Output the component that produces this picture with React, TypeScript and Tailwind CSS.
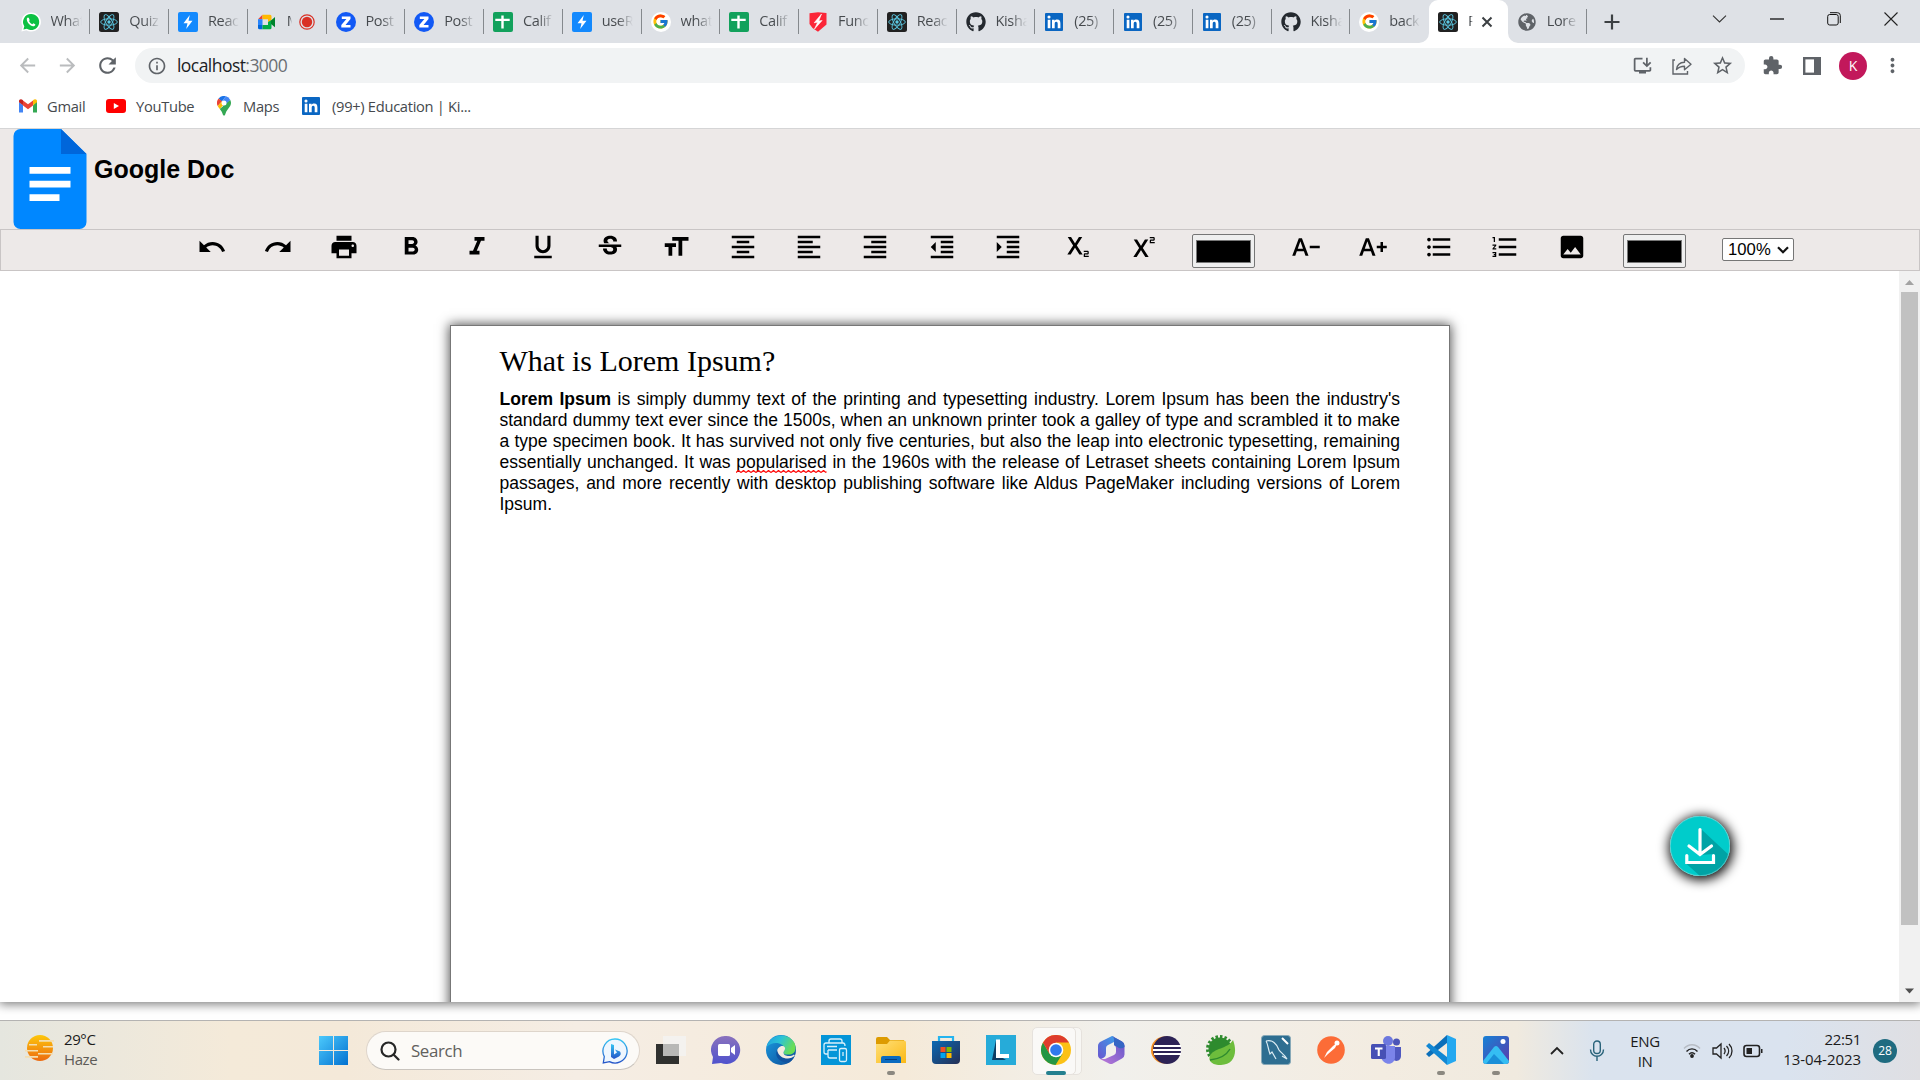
import React from "react";
import {
  MdUndo, MdRedo, MdPrint, MdFormatBold, MdFormatItalic, MdFormatUnderlined, MdStrikethroughS, MdFormatSize,
  MdFormatAlignCenter, MdFormatAlignLeft, MdFormatAlignRight, MdFormatIndentDecrease, MdFormatIndentIncrease,
  MdSubscript, MdSuperscript, MdTextDecrease, MdTextIncrease, MdFormatListBulleted, MdFormatListNumbered, MdImage,
  MdArrowBack, MdArrowForward, MdRefresh, MdInfoOutline, MdStarBorder, MdExtension, MdMoreVert, MdInstallDesktop,
} from "react-icons/md";
import { FaGithub, FaGlobeAmericas } from "react-icons/fa";
import { FcGoogle } from "react-icons/fc";

const WhatsApp = () => (
  <svg width="20" height="20" viewBox="0 0 20 20">
    <path d="M10 .4a9.5 9.5 0 0 0-8.3 14.2L.4 19.6l5.1-1.3A9.6 9.6 0 1 0 10 .4Z" fill="#fff" />
    <path d="M10 2a8 8 0 0 0-6.7 12.3l-.9 3.3 3.4-.9A8 8 0 1 0 10 2Z" fill="#0dc143" />
    <path d="M7 5.6c-.8.3-1.3 1.100-1.200 2 .3 3.200 3.200 6.200 6.400 6.700 1 .1 1.900-.5 2.100-1.500l-.1-.6-1.900-.9-.9 1c-1.500-.5-2.700-1.700-3.400-3.200l.7-.9-.8-2.200Z" fill="#fff" />
  </svg>
);

const ReactIcon = () => (
  <svg width="20" height="20" viewBox="0 0 20 20">
    <rect width="20" height="20" rx="2.500" fill="#212121" />
    <g fill="none" stroke="#5bc9e4" strokeWidth=".9">
      <ellipse cx="10" cy="10" rx="8.300" ry="3.200" />
      <ellipse cx="10" cy="10" rx="8.300" ry="3.200" transform="rotate(60 10 10)" />
      <ellipse cx="10" cy="10" rx="8.300" ry="3.200" transform="rotate(120 10 10)" />
    </g>
    <circle cx="10" cy="10" r="1.700" fill="#5bc9e4" />
  </svg>
);

const Bolt = () => (
  <svg width="20" height="20" viewBox="0 0 20 20">
    <rect width="20" height="20" rx="2" fill="#1389fd" />
    <path d="M11.800 3 5.500 11.300h4L8.200 17l6.300-8.300h-4L11.800 3Z" fill="#fff" />
  </svg>
);

const Meet = () => (
  <svg width="20" height="20" viewBox="0 0 20 20">
    <path d="M1 7.200 5.500 2.700V7.200Z" fill="#ea4335" />
    <path d="M5.500 2.700H13a1.500 1.500 0 0 1 1.500 1.500v4L11 10V7.200H5.500Z" fill="#ffba00" />
    <path d="M1 7.200h4.500V13H1Z" fill="#2684fc" />
    <path d="M1 13h4.500v4.300h-3A1.500 1.500 0 0 1 1 15.800Z" fill="#0066da" />
    <path d="M5.500 13H11v-3l3.500-2v7.800a1.500 1.500 0 0 1-1.500 1.500H5.500Z" fill="#00ac47" />
    <path d="M14 8.400 18 5v10.300L14 12Z" fill="#00832d" />
  </svg>
);

const Zed = () => (
  <svg width="20" height="20" viewBox="0 0 20 20">
    <circle cx="10" cy="10" r="10" fill="#1259f5" />
    <path d="M5.800 4.500h8.700v2.600l-5 5.800h5v2.600H5.300v-2.600l5.100-5.800H5.800Z" fill="#fff" />
  </svg>
);

const Sheet = () => (
  <svg width="20" height="20" viewBox="0 0 20 20">
    <rect width="20" height="20" rx="2" fill="#12a15c" />
    <path d="M8.300 3.500h2.400v3.300h6v2.300h-6v7.400H8.300V9.100h-6V6.800h6Z" fill="#fff" />
  </svg>
);

const RedShield = () => (
  <svg width="20" height="20" viewBox="0 0 20 20">
    <path d="M1.500 1.200 10 .3l8.500.7v11.500L10 19.800 4.500 16 1.500 12Z" fill="#fb2638" />
    <path d="M13.500 2 6.200 10.800l3.500-.6L6.500 17l7.600-8.500-3.400.5 2.800-7Z" fill="#fff" stroke="#fff" strokeWidth=".6" />
  </svg>
);

const LinkedIn = () => (
  <svg width="18" height="18" viewBox="0 0 18 18">
    <rect width="18" height="18" rx="1" fill="#0a66c2" />
    <path d="M2.700 6.700h2.700v8.500H2.700ZM4 2.500a1.500 1.500 0 1 1 0 3.100 1.500 1.500 0 0 1 0-3.100ZM7 6.700h2.600v1.200c.5-.9 1.400-1.400 2.600-1.400 2.500 0 3.200 1.600 3.200 4v4.700h-2.700V11c0-1.200-.1-2.300-1.500-2.300S9.700 9.800 9.700 11v4.200H7Z" fill="#fff" />
  </svg>
);

const Google = () => (
  <span className="flex size-5 items-center justify-center rounded-full bg-white"><FcGoogle size={17} /></span>
);

const Record = () => (
  <svg width="16" height="16" viewBox="0 0 16 16" className="shrink-0">
    <circle cx="8" cy="8" r="7.200" fill="none" stroke="#d93025" strokeWidth="1.200" />
    <circle cx="8" cy="8" r="5.200" fill="#d93025" />
  </svg>
);

type Tab = { icon: React.ReactNode; label: string; kind?: "rec" | "active" | "bare" };
const tabs: Tab[] = [
  { icon: <WhatsApp />, label: "What" },
  { icon: <ReactIcon />, label: "Quiz" },
  { icon: <Bolt />, label: "Reac" },
  { icon: <Meet />, label: "M", kind: "rec" },
  { icon: <Zed />, label: "Post" },
  { icon: <Zed />, label: "Post" },
  { icon: <Sheet />, label: "Calif" },
  { icon: <Bolt />, label: "useR" },
  { icon: <Google />, label: "what" },
  { icon: <Sheet />, label: "Calif" },
  { icon: <RedShield />, label: "Func" },
  { icon: <ReactIcon />, label: "Reac" },
  { icon: <FaGithub size={20} color="#24292f" />, label: "Kisha" },
  { icon: <LinkedIn />, label: "(25)" },
  { icon: <LinkedIn />, label: "(25)" },
  { icon: <LinkedIn />, label: "(25)" },
  { icon: <FaGithub size={20} color="#24292f" />, label: "Kisha" },
  { icon: <Google />, label: "back", kind: "bare" },
  { icon: <ReactIcon />, label: "R", kind: "active" },
  { icon: <FaGlobeAmericas size={18} color="#5f6368" />, label: "Lore" },
];

function TabItem({ tab }: { tab: Tab }) {
  const short = tab.kind === "rec" || tab.kind === "active";
  return (
    <div className={`relative flex h-[43px] w-[78.750px] shrink-0 items-center pl-[9px] ${tab.kind === "active" ? "rounded-t-[9px] bg-white" : ""}`}>
      <span className="flex size-5 shrink-0 items-center justify-center">{tab.icon}</span>
      <span
        className={`-mt-[2px] ml-[10px] overflow-hidden whitespace-nowrap bg-clip-text bg-linear-to-r from-[#45494d] from-50% to-transparent text-[14.5px] tracking-[-0.35px] text-transparent ${short ? "w-[5px]" : "w-[31px]"}`}
      >
        {tab.label}
      </span>
      {tab.kind === "rec" && <span className="ml-[7px]"><Record /></span>}
      {tab.kind === "active" && (
        <svg width="12" height="12" viewBox="0 0 12 12" className="ml-[8px]"><path d="M1.500 1.500l9 9M10.500 1.500l-9 9" stroke="#3c4043" strokeWidth="2" /></svg>
      )}
      {tab.kind === "active" ? (
        <>
          <svg className="absolute -left-[10px] bottom-0" width="10" height="10"><path d="M10 0V10H0A10 10 0 0 0 10 0Z" fill="#fff" /></svg>
          <svg className="absolute -right-[10px] bottom-0" width="10" height="10"><path d="M0 0V10H10A10 10 0 0 1 0 0Z" fill="#fff" /></svg>
        </>
      ) : (
        tab.kind !== "bare" && <span className="absolute right-0 top-[9px] h-[25px] w-px bg-[#85898d]" />
      )}
    </div>
  );
}

function TabStrip() {
  return (
    <div className="flex h-[43px] bg-[#dee1e6] pl-[11.500px]">
      {tabs.map((t, i) => <TabItem key={i} tab={t} />)}
      <div className="flex w-[51px] items-center justify-center">
        <svg width="16" height="16" viewBox="0 0 16 16"><path d="M8 .5v15M.5 8h15" stroke="#3c4043" strokeWidth="2.200" /></svg>
      </div>
      <div className="ml-auto flex h-[37px] w-[229px] items-center justify-between pr-[22px] pl-[21px]">
        <svg width="15" height="8" viewBox="0 0 15 8"><path d="M1 .7l6.500 6.300L14 .7" fill="none" stroke="#333" strokeWidth="1.100" /></svg>
        <svg width="14" height="2"><path d="M0 1h14" stroke="#111" strokeWidth="1.300" /></svg>
        <svg width="14" height="14" viewBox="0 0 14 14"><rect x=".7" y="2.500" width="10.500" height="10.500" rx="2" fill="none" stroke="#111" /><path d="M3 .7h7.500a2.800 2.800 0 0 1 2.800 2.800V11" fill="none" stroke="#111" /></svg>
        <svg width="14" height="14" viewBox="0 0 14 14"><path d="M.5.500l13 13M13.500.5l-13 13" stroke="#222" strokeWidth="1.100" /></svg>
      </div>
    </div>
  );
}

function AddressBar() {
  return (
    <div className="flex h-[45px] items-center bg-white pl-[16px]">
      <MdArrowBack size={23} color="#babcbe" />
      <MdArrowForward size={23} color="#babcbe" className="ml-[17px]" />
      <MdRefresh size={25} color="#5f6368" className="ml-[16px]" />
      <div className="ml-[15px] flex h-[35px] w-[1610px] items-center rounded-full bg-[#f1f3f4] pl-[12px]">
        <MdInfoOutline size={20} color="#5f6368" />
        <span className="ml-[10px] text-[17.500px] tracking-[-0.550px] text-[#202124]">localhost<span className="text-[#6b6f73]">:3000</span></span>
        <div className="ml-auto flex items-center gap-[19px] pr-[11px]">
          <MdInstallDesktop size={21} color="#5f6368" />
          <svg width="20" height="18" viewBox="0 0 20 18" fill="none" stroke="#5f6368" strokeWidth="1.400">
            <path d="M3 3H1v14h14.500v-3" />
            <path d="M4.500 12.500C5 8 8 5.500 12.500 5.300V1.500l6.500 5.700-6.500 5.600V9.200C9 9.200 6.500 10.200 4.500 12.500Z" strokeLinejoin="round" />
          </svg>
          <MdStarBorder size={23} color="#5f6368" />
        </div>
      </div>
      <MdExtension size={21} color="#5f6368" className="ml-[17px]" />
      <svg width="18" height="18" viewBox="0 0 18 18" className="ml-[20px]"><rect x="1.200" y="1.200" width="15.600" height="15.600" fill="#fff" stroke="#5f6368" strokeWidth="2.400" /><path d="M11 0h7v18h-7z" fill="#5f6368" /></svg>
      <span className="ml-[18px] flex size-[28px] items-center justify-center rounded-full bg-[#c2185b] text-[14px] text-white">K</span>
      <MdMoreVert size={23} color="#5f6368" className="ml-[14px]" />
    </div>
  );
}

function Bookmarks() {
  return (
    <div className="flex h-[40px] items-center bg-white pl-[19px] pb-[4px] text-[14.700px] tracking-[-0.300px] text-[#45494d]">
      <svg width="18" height="14" viewBox="0 0 18 14">
        <path d="M0 2v11.500h4V6.300L0 3Z" fill="#4285f4" /><path d="M14 6.300v7.200h4V2Z" fill="#34a853" />
        <path d="M4 1.500v5L9 10.300l5-3.800v-5L9 5.300Z" fill="#ea4335" /><path d="M0 2C0 .2 2.300-.6 4 1.300v5L0 3.300Z" fill="#c5221f" /><path d="M18 2c0-1.800-2.300-2.600-4-.7v5l4-3Z" fill="#fbbc04" />
      </svg>
      <span className="ml-[10px] w-[49px]">Gmail</span>
      <svg width="20" height="14" viewBox="0 0 20 14" className="ml-[10px]"><rect width="20" height="14" rx="3" fill="#f00" /><path d="M7.800 4v6l5.200-3Z" fill="#fff" /></svg>
      <span className="ml-[10px] w-[59px]">YouTube</span>
      <svg width="14" height="20" viewBox="0 0 14 20" className="ml-[22px]">
        <path d="M1.600 2.500A7 7 0 0 1 9 .3L4.700 5.400Z" fill="#1a73e8" /><path d="M9 .3a7 7 0 0 1 4.300 3.600L7 11.300 4.700 5.400Z" fill="#4285f4" />
        <path d="M1.600 2.500A7 7 0 0 0 .7 10L5 5.200Z" fill="#ea4335" /><path d="M.7 10c.5 1 1.200 2 2.100 3.100L9.400 5.600 5 5.200Z" fill="#fbbc04" />
        <path d="M13.300 3.900c1 2 .9 4.300-.1 6.200-1.500 2.600-4 4.400-5 8.500-.3 1.500-2 1.500-2.400 0-.4-1.700-1.400-3.600-3-5.500Z" fill="#34a853" /><circle cx="7" cy="7" r="2.500" fill="#fff" />
      </svg>
      <span className="ml-[12px] w-[42px]">Maps</span>
      <span className="ml-[17px]"><LinkedIn /></span>
      <span className="ml-[12px] whitespace-nowrap">(99+) Education | Ki...</span>
    </div>
  );
}

const tools = [
  MdUndo, MdRedo, MdPrint, MdFormatBold, MdFormatItalic, MdFormatUnderlined, MdStrikethroughS, MdFormatSize,
  MdFormatAlignCenter, MdFormatAlignLeft, MdFormatAlignRight, MdFormatIndentDecrease, MdFormatIndentIncrease,
  MdSubscript, MdSuperscript,
];
const moreTools = [MdTextDecrease, MdTextIncrease, MdFormatListBulleted, MdFormatListNumbered, MdImage];

const Swatch = () => (
  <div className="mt-[4px] flex h-[34px] w-[62.5px] shrink-0 items-center justify-center rounded-[2px] border border-[#767676] bg-[#efefef]">
    <div className="h-[23px] w-[55.500px] border border-[#777] bg-black" />
  </div>
);

function DocHeader() {
  return (
    <header className="relative z-10 bg-[#ede9e8]">
      <div className="flex h-[101px] border-t border-[#d5d5d6] pl-[13px]">
        <svg width="74" height="100" viewBox="0 0 74 100">
          <path d="M7 0H48L73.500 25V93a7 7 0 0 1-7 7H7.500a7 7 0 0 1-7-7V7a7 7 0 0 1 7-7Z" fill="#0087ff" />
          <path d="M48 0L73.500 25H48Z" fill="#0066da" />
          <path d="M16.500 38h41v6.700h-41zM16.500 51.700h41v6.700h-41zM16.500 65.200h30v6.700h-30z" fill="#fff" />
        </svg>
        <h1 className="ml-[7px] mt-[26px] font-['Liberation_Sans',sans-serif] text-[25px] leading-[29px] font-bold text-black">Google Doc</h1>
      </div>
      <div className="flex h-[42px] items-start gap-[36.400px] border border-[#c9c5c5] pl-[195.500px] text-black">
        {tools.map((Icon, i) => <Icon key={i} size={30} className="mt-[2px] shrink-0" />)}
        <Swatch />
        {moreTools.map((Icon, i) => <Icon key={i} size={30} className="mt-[2px] shrink-0" />)}
        <Swatch />
        <div className="mt-[8px] flex h-[23px] w-[72px] shrink-0 items-center rounded-[2px] border border-[#767676] bg-white pl-[5px] font-['Liberation_Sans',sans-serif] text-[16.670px] leading-[21px]">
          100%
          <svg width="12" height="8" viewBox="0 0 12 8" className="ml-[6px]"><path d="M1 1.200l5 5 5-5" fill="none" stroke="#111" strokeWidth="2.200" /></svg>
        </div>
      </div>
    </header>
  );
}

const DownloadButton = () => (
  <div className="absolute left-[1670px] top-[545px] size-[60px] rounded-full shadow-[1px_2px_12px_2px_#000]">
    <svg width="60" height="60" viewBox="0 0 60 60">
      <defs><clipPath id="disc"><circle cx="30" cy="30" r="30" /></clipPath></defs>
      <circle cx="30" cy="30" r="30" fill="#00cccb" />
      <g clipPath="url(#disc)">
        <path d="M31 13 60 40V60H30L16 47.500H44V38L30 39V20Z" fill="#00a3a5" />
      </g>
      <path d="M30 13.500v24M19 30l11 8.500L41.500 30M16.800 39.500v7h26.700v-7" fill="none" stroke="#fff" strokeWidth="3.200" strokeLinecap="round" />
      <circle cx="30" cy="30" r="29.700" fill="none" stroke="#7fd3d1" strokeWidth=".6" />
    </svg>
  </div>
);

const Misspelled = ({ children }: { children: React.ReactNode }) => (
  <span className="relative inline-block">
    {children}
    <svg className="absolute inset-x-0 bottom-0 h-[3px] w-full">
      <defs><pattern id="squiggle" width="5" height="3" patternUnits="userSpaceOnUse"><path d="M0 2.500 2.500.5 5 2.500" fill="none" stroke="#f00" strokeWidth="1.200" /></pattern></defs>
      <rect width="100%" height="3" fill="url(#squiggle)" />
    </svg>
  </span>
);

function Editor() {
  return (
    <main className="relative flex h-[731px] justify-between bg-white shadow-[0_1px_10px_1px_#777]">
      <div className="h-full flex-1 overflow-hidden pl-[450px] pt-[54px]">
        <article className="h-[800px] w-[1000px] border border-[#777] bg-white px-[49px] pt-[17px] text-black shadow-[0_0_11px_1px_#555]">
          <h2 className="-ml-[0.500px] font-['Liberation_Serif',serif] text-[30px] leading-[35px]">What is Lorem Ipsum?</h2>
          <p className="-ml-[0.500px] mt-[11px] text-justify font-['Liberation_Sans',sans-serif] text-[17.500px] leading-[21px]">
            <b>Lorem Ipsum</b> is simply dummy text of the printing and typesetting industry. Lorem Ipsum has been the industry's
            standard dummy text ever since the 1500s, when an unknown printer took a galley of type and scrambled it to make
            a type specimen book. It has survived not only five centuries, but also the leap into electronic typesetting, remaining
            essentially unchanged. It was <Misspelled>popularised</Misspelled> in the 1960s with the release of Letraset sheets containing Lorem Ipsum
            passages, and more recently with desktop publishing software like Aldus PageMaker including versions of Lorem Ipsum.
          </p>
        </article>
      </div>
      <div className="flex h-full w-[21px] flex-col items-center bg-[#f1f1f1]">
        <svg width="21" height="21"><path d="M6 14L10.500 9 15 14Z" fill="#a3a3a3" /></svg>
        <div className="h-[633px] w-[17px] bg-[#c1c1c1]" />
        <svg width="21" height="21" className="mt-auto"><path d="M6 7.500L10.500 12.500 15 7.500Z" fill="#505050" /></svg>
      </div>
      <DownloadButton />
    </main>
  );
}

const TaskIcon = ({ children, dot, active }: { children: React.ReactNode; dot?: boolean; active?: boolean }) => (
  <div className={`relative flex h-[48px] w-[55px] shrink-0 items-center justify-center ${active ? "before:absolute before:inset-y-0 before:left-[8px] before:right-[1px] before:rounded-[5px] before:border before:border-[#e6e2dd] before:bg-[#f8f7f4] after:absolute after:inset-y-0 after:left-[4px] after:right-[7px] after:rounded-[5px] after:border after:border-[#e6e2dd] after:bg-[#faf9f7]" : ""}`}>
    <svg width="30" height="30" viewBox="0 0 30 30" className="relative z-10 -mt-[1px]">{children}</svg>
    {dot && <span className="absolute bottom-0 h-[4px] w-[8px] rounded-full bg-[#8b8880]" />}
    {active && <span className="absolute bottom-0 z-10 h-[4px] w-[20px] rounded-full bg-[#24808f]" />}
  </div>
);

const Defs = () => (
  <svg width="0" height="0" className="absolute">
    <defs>
      <linearGradient id="win" x1="0" y1="0" x2="1" y2="1"><stop stopColor="#4cc9fc" /><stop offset="1" stopColor="#0271d0" /></linearGradient>
      <linearGradient id="chat" x1="0" y1="0" x2="0" y2="1"><stop stopColor="#8a72bd" /><stop offset="1" stopColor="#4f52cd" /></linearGradient>
      <linearGradient id="edgeTop" x1="0" y1="0" x2="1" y2=".4"><stop stopColor="#1f9be2" /><stop offset=".5" stopColor="#2cc3d5" /><stop offset="1" stopColor="#6ade55" /></linearGradient>
      <linearGradient id="edgeLow" x1="0" y1="0" x2="1" y2="1"><stop stopColor="#1b9de2" /><stop offset="1" stopColor="#0c4a96" /></linearGradient>
      <linearGradient id="fold" x1="0" y1="0" x2="1" y2="1"><stop stopColor="#ffe079" /><stop offset="1" stopColor="#fbb916" /></linearGradient>
      <linearGradient id="store" x1="0" y1="0" x2="1" y2="1"><stop stopColor="#0b69b4" /><stop offset="1" stopColor="#262f54" /></linearGradient>
      <linearGradient id="sun" x1="0" y1="0" x2="0" y2="1"><stop stopColor="#fdc70b" /><stop offset="1" stopColor="#ec6a10" /></linearGradient>
      <linearGradient id="officeL" x1="1" y1="0" x2="0" y2="1"><stop stopColor="#3d9be8" /><stop offset="1" stopColor="#6a55cf" /></linearGradient>
      <linearGradient id="officeR" x1="1" y1="0" x2="0" y2="1"><stop stopColor="#5a55c8" /><stop offset="1" stopColor="#c07ad8" /></linearGradient>
      <linearGradient id="pic" x1="0" y1="0" x2="1" y2="1"><stop stopColor="#1682d6" /><stop offset="1" stopColor="#5b3bab" /></linearGradient>
      <linearGradient id="bing" x1="0" y1="0" x2="0" y2="1"><stop stopColor="#35c5f3" /><stop offset="1" stopColor="#2454c8" /></linearGradient>
    </defs>
  </svg>
);

function Taskbar() {
  return (
    <footer className="flex h-[60px] items-center border-t border-[#b4b3b2] bg-[linear-gradient(90deg,#e5e6df_0%,#f4ead9_12%,#f4e9d9_18%,#f5ede4_30%,#f5ead9_47%,#f1f0ec_58%,#f3ece1_72%,#f0eadf_79%,#dae3ee_83%,#dae3ef_93%,#dfdfe3_100%)] text-[15px] text-[#1b1b1b]">
      <Defs />
      <svg width="30" height="28" viewBox="0 0 30 28" className="-mt-[5px] ml-[25px]">
        <path d="M15 1A13 13 0 1 1 15 27 13 13 0 0 1 15 1Z" fill="url(#sun)" />
        <path d="M14 6h15v1.700H14zM4 10h8v1.500H4zM18 12h10v1.500H18zM0 16h13v1.500H0zM13 19h15v1.500H13zM0 22h13v1.700H0z" fill="#f3deb0" />
      </svg>
      <div className="-mt-[3px] ml-[9px] w-[255px] text-[15px] leading-[20px] tracking-[-0.400px]"><div>29°C</div><div className="text-[#5d5b57]">Haze</div></div>
      <svg width="29" height="29" viewBox="0 0 29 29"><path d="M0 0h14v14H0zM15 0h14v14H15zM0 15h14v14H0zM15 15h14v14H15z" fill="url(#win)" /></svg>
      <div className="ml-[18px] flex h-[39px] w-[274px] items-center rounded-full border border-[#ded5cb] border-b-[#c9c4be] bg-[#fcfaf7] pl-[13px] pr-[11px]">
        <svg width="20" height="20" viewBox="0 0 20 20" fill="none" stroke="#262626" strokeWidth="2.200"><circle cx="8.500" cy="8.500" r="7" /><path d="M13.500 13.500l5 5" strokeLinecap="round" /></svg>
        <span className="ml-[11px] text-[16.900px] tracking-[-0.400px] text-[#62605d]">Search</span>
        <svg width="26" height="26" viewBox="0 0 26 26" className="ml-auto">
          <path d="M13 1a12 12 0 1 1-5.500 22.600L1.300 25l1-6.500A12 12 0 0 1 13 1Z" fill="#eef6fe" stroke="url(#bing)" strokeWidth="1.300" />
          <path d="M9 6l3 1v9.500l3-2-2-3 5 2c1.500 2 .5 4-1 5L12 21l-3-2Z" fill="url(#bing)" />
        </svg>
      </div>
      <div className="ml-[3px] flex items-center">
        <TaskIcon><path d="M0 9h23v20H0z" fill="#30312f" /><path d="M7 1h23v20H7z" fill="#f4f4f3" opacity=".8" /><path d="M7 9h16v12H7z" fill="#b8b8b6" /></TaskIcon>
        <TaskIcon>
          <path d="M15 1a14 14 0 1 1-5 27L1 29l1-7A14 14 0 0 1 15 1Z" fill="url(#chat)" /><rect x="7" y="9" width="12" height="12" rx="1.500" fill="#fff" /><path d="M20 13l4-3v10l-4-3Z" fill="#fff" />
        </TaskIcon>
        <TaskIcon>
          <circle cx="15" cy="15" r="15" fill="url(#edgeLow)" />
          <path d="M.5 12C3-1 22-4 28.500 8c2 5 1.500 11-5.500 11.500-6 .5-6-2-5-3.500C21 9 8 4 .5 12Z" fill="url(#edgeTop)" />
          <path d="M11 17c0-4 4-7 7-5.500 2.500 2 0 4-.5 6 0 4 7 4.500 10.500 2l.8 1C25 25 11 27 11 17Z" fill="#f3eadf" />
          <path d="M11 15c-3 7 3 13 12 12.500 2-1 4-3 5-5.500-6 3-15 2-17-7Z" fill="#10529f" />
        </TaskIcon>
        <TaskIcon>
          <path d="M0 0h30v30H0z" fill="#0495d8" />
          <g fill="none" stroke="#d9f0fa" strokeWidth="1.300"><path d="M8 8V6q0-2 2-2h9q2 0 2 2v2M7 19H5q-2 0-2-2v-7q0-2 2-2h17q2 0 2 3M7 15h9M16 23H9q-2 0-2-2v-6M6 11.500h10" /><rect x="18.500" y="13.500" width="7" height="13" rx="1.500" /><path d="M22 17v4" /></g>
        </TaskIcon>
        <TaskIcon dot>
          <path d="M0 4a2 2 0 0 1 2-2h9l3 3h14v6H0Z" fill="#dd9b00" /><path d="M0 9h11l3-3.500h14a2 2 0 0 1 2 2V28H0Z" fill="url(#fold)" /><path d="M5 28v-5a2 2 0 0 1 2-2h16a2 2 0 0 1 2 2v5Z" fill="#0b6bc0" /><path d="M9 24.500h12" stroke="#063f80" />
        </TaskIcon>
        <TaskIcon>
          <path d="M8 7V2h14v5" fill="none" stroke="#25b4ef" strokeWidth="2.200" /><path d="M1 6h28v19a4 4 0 0 1-4 4H5a4 4 0 0 1-4-4Z" fill="url(#store)" />
          <path d="M9.500 12h5v5h-5z" fill="#f25022" /><path d="M15.500 12h5v5h-5z" fill="#7fba00" /><path d="M9.500 18h5v5h-5z" fill="#00a4ef" /><path d="M15.500 18h5v5h-5z" fill="#ffb900" />
        </TaskIcon>
        <TaskIcon><path d="M0 0h30v30H0z" fill="#26abd9" /><path d="M10 5 6 25h14l-8-5Z" fill="#0d3d63" /><path d="M10 4.500h4V19h9v4H10Z" fill="#fff" /></TaskIcon>
        <TaskIcon active>
          <circle cx="15" cy="15" r="15" fill="#fbc116" /><path d="M2 7.500A15 15 0 0 0 14.500 30L21.500 18.800 8.500 18.800Z" fill="#249644" />
          <path d="M2 7.500 8.500 18.800 15 15 15 7.500H28A15 15 0 0 0 2 7.500Z" fill="#de3c2d" /><circle cx="15" cy="15" r="7.300" fill="#fff" /><circle cx="15" cy="15" r="5.800" fill="#3079ee" />
        </TaskIcon>
        <TaskIcon>
          <path d="M16 1 5 6.500Q2 8 2 11v9q0 3 3 4l3-1.500q2-1 2-4V13q0-2 2-3l6-3V3q0-2-2-2Z" fill="url(#officeL)" />
          <path d="M16 1q2 1 2 3v6q2 1 2 3v4q0 2-2 3L9 24H4l9 4.500q2 1 4 0l9-5q2.500-1.500 2.500-4v-9q0-3-2.500-4Z" fill="url(#officeR)" />
          <path d="M16 1q2 1 2 3v6l5 3q3 1 5.500-1V11q0-3-2.500-4.500Z" fill="#3566c4" />
        </TaskIcon>
        <TaskIcon>
          <circle cx="13.500" cy="15" r="13.500" fill="#f68f1f" /><circle cx="16" cy="15" r="14" fill="#2c2255" /><path d="M3 10h27v2H3zM2 14h28v2H2zM3 18h27v2H3z" fill="#fff" />
        </TaskIcon>
        <TaskIcon>
          <circle cx="14" cy="14" r="12.500" fill="none" stroke="#2e8b2e" strokeWidth="3" strokeDasharray="2.500 2" /><circle cx="14" cy="14" r="11.500" fill="#2e8b2e" />
          <path d="M27 5c5 13 1 25-12 25-10 0-13-5-11-9C7 13 22 14 27 5Z" fill="#6dbd3c" /><path d="M4 25c9-1 16-4 20-11" fill="none" stroke="#2e8b2e" strokeWidth="1.500" />
        </TaskIcon>
        <TaskIcon>
          <rect x=".5" y=".5" width="29" height="29" rx="3" fill="#2e6e91" stroke="#87a9b8" /><path d="M5 6c6-2 11 3 13 9 2 3 5 4 8 9l-5-3M5 6c2 3 2 8 4 13l2-2 4 7" fill="none" stroke="#dcecf3" strokeWidth="1.200" /><path d="M21 3l6 6" stroke="#fff" strokeWidth="2" />
        </TaskIcon>
        <TaskIcon><circle cx="15" cy="15" r="13.800" fill="#fc6c37" /><path d="M22 7l-3 6-7 6-4 4 3-6 6-6Z" fill="#fff" /><circle cx="21" cy="8" r="2.500" fill="#fff" /></TaskIcon>
        <TaskIcon>
          <circle cx="17" cy="6" r="5" fill="#6d78de" /><circle cx="25.500" cy="7" r="3.500" fill="#4c55b8" /><path d="M21 12h9v9c0 5-6 7-9 2Z" fill="#4f58c0" /><path d="M10 11h14v11c0 9-12 9-14 0Z" fill="#7b84ea" />
          <rect x="0" y="9" width="15" height="15" rx="1.500" fill="#4750b5" /><path d="M4 12.500h7.500v2H8.800v6.500H6.700v-6.500H4Z" fill="#fff" />
        </TaskIcon>
        <TaskIcon dot><path d="M21 0 30 4v22l-9 4Z" fill="#24a8f0" /><path d="M21 8 3 22 0 19 21 0Z" fill="#0b6fba" /><path d="M0 11 3 8 21 22v8Z" fill="#1287d3" /></TaskIcon>
        <TaskIcon dot><rect x="2" y="1" width="26" height="28" rx="3" fill="url(#pic)" /><path d="M2 26 13 12q2-2 4 0L28 26a3 3 0 0 1-3 3H5a3 3 0 0 1-3-3Z" fill="#35bdf2" /><path d="M13 19l10 10H5Z" fill="#1a8fd8" /><circle cx="22" cy="6.500" r="2.500" fill="#fff" /></TaskIcon>
      </div>
      <div className="ml-auto flex items-center pr-[23px]">
        <svg width="14" height="9" viewBox="0 0 14 9"><path d="M1 8l6-6 6 6" fill="none" stroke="#222" strokeWidth="1.800" /></svg>
        <svg width="16" height="22" viewBox="0 0 16 22" className="ml-[25px]" fill="none" stroke="#29637a" strokeWidth="1.400"><rect x="4.700" y="1" width="6.600" height="12.500" rx="3.300" /><path d="M1.500 9.500c0 9 13 9 13 0M8 16.500V21" /></svg>
        <div className="ml-[23px] w-[34px] text-center text-[15px] leading-[20px] tracking-[-0.400px]"><div>ENG</div><div>IN</div></div>
        <svg width="18" height="15" viewBox="0 0 18 15" className="ml-[21px]" fill="none" stroke="#222" strokeWidth="1.400"><path d="M1 5.500c4.500-5 11.500-5 16 0" stroke="#b7bcc4" /><path d="M3.500 8.500c3-3.500 8-3.500 11 0M6 11.200c1.700-1.900 4.300-1.900 6 0" /><circle cx="9" cy="13" r="1.200" fill="#222" /></svg>
        <svg width="21" height="18" viewBox="0 0 21 18" className="ml-[11px]" fill="none" stroke="#222" strokeWidth="1.300"><path d="M1 6h3.500L9 2v14l-4.500-4H1Z" /><path d="M12 6c1.500 2 1.500 4 0 6M14.500 4c2.800 3 2.800 7 0 10M17 2c4 4 4 10 0 14" /></svg>
        <svg width="20" height="14" viewBox="0 0 20 14" className="ml-[10px]"><rect x="1" y="1.500" width="15.500" height="11" rx="2.500" fill="none" stroke="#222" strokeWidth="1.600" /><path d="M3.500 4h5.500v6H3.500zM18 5h1.500v4H18z" fill="#222" /></svg>
        <div className="-mt-[3px] ml-[12px] w-[86px] whitespace-nowrap text-right text-[15px] leading-[20px] tracking-[-0.050px]"><div className="tracking-[-0.350px]">22:51</div><div>13-04-2023</div></div>
        <span className="ml-[12px] flex size-[24px] items-center justify-center rounded-full bg-[#1f6b80] text-[12px] text-white">28</span>
      </div>
    </footer>
  );
}

export default function App() {
  return (
    <div className="flex h-[1080px] w-[1920px] flex-col overflow-hidden bg-white font-['Open_Sans',sans-serif]">
      <TabStrip />
      <AddressBar />
      <Bookmarks />
      <DocHeader />
      <Editor />
      <div className="h-[18px] shrink-0" />
      <Taskbar />
    </div>
  );
}
